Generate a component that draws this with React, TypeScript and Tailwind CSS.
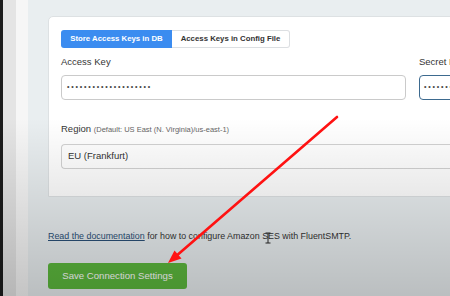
export default function App() {
  const dots = '••••••••••••••••••••'

  return (
    <div className="relative flex h-[296px] w-[450px] overflow-hidden font-['Liberation_Sans',Arial,sans-serif] text-[#353535]">
      <div className="w-[3px] shrink-0 bg-[#1c1c1c]" />
      <div className="w-[13px] shrink-0 bg-[#e4e4e4]" />
      <div className="w-[12px] shrink-0 bg-[#f6f6f6]" />

      <div className="min-w-0 flex-1 bg-[#e9eef0] pl-[20px] pt-[16px]">
        <div className="w-[430px] rounded-tl-[5px] border border-[#dde1e3] bg-white pb-[27px] pl-[12px] pt-[13px]">
          {/* key storage tabs */}
          <div className="flex h-[18px] text-[7.8px] font-bold leading-[18px]">
            <div className="w-[111px] rounded-l-[3px] bg-[#3b8cf0] text-center text-white">Store Access Keys in DB</div>
            <div className="w-[118px] rounded-r-[3px] border border-l-0 border-[#dcdfe2] text-center leading-[16px] text-[#333]">
              Access Keys in Config File
            </div>
          </div>

          <div className="mt-[8px] flex gap-[13px]">
            <div className="w-[345px] shrink-0">
              <div className="mb-[7px] text-[9.5px] leading-[12px]">Access Key</div>
              <div className="flex h-[25px] items-center rounded-[4px] border-[1.5px] border-[#cacaca] px-[5px]">
                <span className="text-[7px] tracking-[1.8px] text-[#444]">{dots}</span>
              </div>
            </div>
            <div className="w-[100px] shrink-0">
              <div className="mb-[7px] whitespace-nowrap text-[9.5px] leading-[12px]">Secret Key</div>
              <div className="flex h-[25px] items-center rounded-[4px] border-[1.5px] border-[#3d6a8f] px-[4px]">
                <span className="text-[7px] tracking-[1.8px] text-[#444]">{dots}</span>
              </div>
            </div>
          </div>

          <div className="mt-[23px] mb-[8px] text-[9.5px] leading-[12px]">
            Region <span className="text-[7.5px] text-[#666]">(Default: US East (N. Virginia)/us-east-1)</span>
          </div>
          <div className="flex h-[25px] items-center rounded-l-[4px] border border-r-0 border-[#d2d2d2] px-[6px] text-[9.5px] text-[#333]">
            EU (Frankfurt)
          </div>
        </div>

        <p className="mt-[33px] text-[8.9px] leading-[12px] text-[#333]">
          <a className="text-[#2a5077] underline">Read the documentation</a> for how to configure Amazon SES with FluentSMTP.
        </p>

        <button className="mt-[21px] flex h-[26px] w-[139px] items-center justify-center rounded-[3px] bg-[#5cb83d] text-[9.6px] text-white">
          Save Connection Settings
        </button>
      </div>

      {/* video darkening toward the bottom */}
      <div className="pointer-events-none absolute inset-0 bg-linear-to-b from-transparent from-[40%] to-black/20" />

      {/* red annotation arrow and text cursor */}
      <svg className="pointer-events-none absolute inset-0" width="450" height="296" viewBox="0 0 450 296">
        <line x1="337" y1="117" x2="175" y2="257" stroke="#ff1212" strokeWidth="2.6" strokeLinecap="round" />
        <polygon points="168,263 181.5,258.5 174.5,250.5" fill="#ff1212" />
        <path d="M265.5 233h5M268 233v10M265.5 243h5" stroke="#222" strokeWidth="1" fill="none" />
      </svg>
    </div>
  )
}
